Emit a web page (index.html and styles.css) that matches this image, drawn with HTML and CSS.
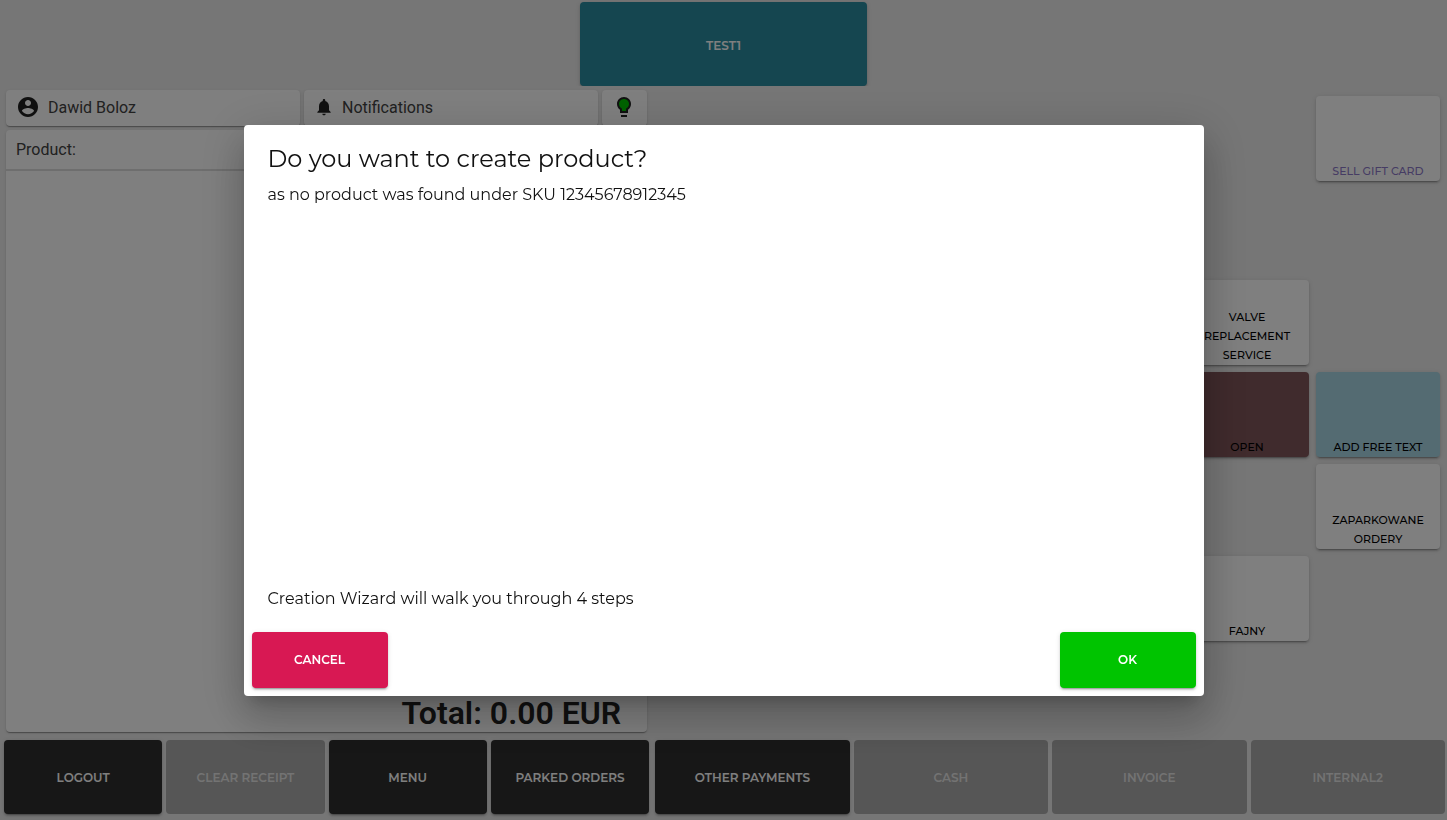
FILE: index.html
```html
<!DOCTYPE html>
<html lang="en">

<head>
    <meta charset="UTF-8" />
    <meta name="viewport" content="width=device-width, initial-scale=1.0" />
    <title>Point of Sale</title>
    <link rel="stylesheet" href="styles.css">
</head>

<body>
    <div class="pos">
        <!-- Top tabs -->
        <nav class="top-bar">
            <button type="button" class="btn btn-tab">TEST1</button>
        </nav>

        <main class="workspace">
            <!-- Receipt -->
            <section class="receipt">
                <div class="status-row">
                    <button type="button" class="status status-wide">
                        <svg class="icon" viewBox="0 0 24 24" aria-hidden="true">
                            <path d="M12 2C6.48 2 2 6.48 2 12s4.48 10 10 10 10-4.48 10-10S17.52 2 12 2zm0 3c1.66 0 3 1.34 3 3s-1.34 3-3 3-3-1.34-3-3 1.34-3 3-3zm0 14.2c-2.5 0-4.71-1.28-6-3.22.03-1.99 4-3.08 6-3.08 1.99 0 5.97 1.09 6 3.08-1.29 1.94-3.5 3.22-6 3.22z" />
                        </svg>
                        <span>Dawid Boloz</span>
                    </button>
                    <button type="button" class="status status-wide">
                        <svg class="icon icon-bell" viewBox="0 0 24 24" aria-hidden="true">
                            <path d="M12 22c1.1 0 2-.9 2-2h-4c0 1.1.89 2 2 2zm6-6v-5c0-3.07-1.64-5.64-4.5-6.32V4c0-.83-.67-1.5-1.5-1.5s-1.5.67-1.5 1.5v.68C7.63 5.36 6 7.92 6 11v5l-2 2v1h16v-1l-2-2z" />
                        </svg>
                        <span>Notifications</span>
                    </button>
                    <button type="button" class="status status-bulb" aria-label="Connection status">
                        <svg class="icon" viewBox="0 0 24 24" aria-hidden="true">
                            <path class="bulb-light" d="M12 3a6 6 0 0 0-6 6c0 2.2 1.2 4 3 5.1V17h6v-2.9c1.8-1.1 3-2.9 3-5.1a6 6 0 0 0-6-6z" />
                            <path d="M9 20h6v2H9z" />
                            <path d="M12 2C8.14 2 5 5.14 5 9c0 2.38 1.19 4.47 3 5.74V18h8v-3.26c1.81-1.27 3-3.36 3-5.74 0-3.86-3.14-7-7-7zm2.85 11.1l-.85.6V16h-4v-2.3l-.85-.6C7.8 12.16 7 10.63 7 9c0-2.76 2.24-5 5-5s5 2.24 5 5c0 1.63-.8 3.16-2.15 4.1z" />
                        </svg>
                    </button>
                </div>
                <div class="receipt-card">
                    <div class="receipt-head">Product:</div>
                    <div class="receipt-total">Total: 0.00 EUR</div>
                </div>
            </section>

            <!-- Quick buttons -->
            <section class="tiles">
                <button type="button" class="tile tile-gift">SELL GIFT CARD</button>
                <button type="button" class="tile tile-valve">VALVE REPLACEMENT SERVICE</button>
                <button type="button" class="tile tile-open">OPEN</button>
                <button type="button" class="tile tile-text">ADD FREE TEXT</button>
                <button type="button" class="tile tile-parked">ZAPARKOWANE ORDERY</button>
                <button type="button" class="tile tile-fajny">FAJNY</button>
            </section>
        </main>

        <!-- Bottom actions -->
        <footer class="actions">
            <div class="action-group action-left">
                <button type="button" class="btn btn-dark">LOGOUT</button>
                <button type="button" class="btn" disabled>CLEAR RECEIPT</button>
                <button type="button" class="btn btn-dark">MENU</button>
                <button type="button" class="btn btn-dark">PARKED ORDERS</button>
            </div>
            <div class="action-group action-right">
                <button type="button" class="btn btn-dark">OTHER PAYMENTS</button>
                <button type="button" class="btn" disabled>CASH</button>
                <button type="button" class="btn" disabled>INVOICE</button>
                <button type="button" class="btn" disabled>INTERNAL2</button>
            </div>
        </footer>
    </div>

    <!-- Create product dialog -->
    <div class="overlay">
        <div class="dialog" role="dialog" aria-modal="true" aria-labelledby="dialog-title">
            <div class="dialog-body">
                <h2 id="dialog-title">Do you want to create product?</h2>
                <p>as no product was found under SKU 12345678912345</p>
                <p class="dialog-note">Creation Wizard will walk you through 4 steps</p>
            </div>
            <div class="dialog-actions">
                <button type="button" class="btn btn-cancel">CANCEL</button>
                <button type="button" class="btn btn-ok">OK</button>
            </div>
        </div>
    </div>
</body>

</html>
```
FILE: styles.css
```css
* {
    box-sizing: border-box;
}

body {
    margin: 0;
    background-color: #ececec;
    color: #212121;
    font-family: Roboto, sans-serif;
    font-size: 16px;
}

button {
    border: none;
    font-family: inherit;
    cursor: pointer;
}

.pos {
    display: flex;
    flex-direction: column;
    height: 100vh;
}

/* Buttons */
.btn {
    border-radius: 4px;
    font-family: Montserrat, Inter, sans-serif;
    font-size: 12px;
    font-weight: 600;
    color: #fff;
    box-shadow: 0 3px 1px -2px rgba(0, 0, 0, 0.2), 0 2px 2px rgba(0, 0, 0, 0.14), 0 1px 5px rgba(0, 0, 0, 0.12);
}

.btn:disabled {
    background-color: #acacac;
    color: #e6e6e6;
    box-shadow: none;
    cursor: default;
}

.btn-dark {
    background-color: #2e2e2e;
}

/* Top tabs */
.top-bar {
    display: flex;
    justify-content: center;
    height: 86px;
    padding-top: 2px;
    overflow: hidden;
}

.btn-tab {
    width: calc(20% - 2px);
    padding-top: 4px;
    background-color: #2a8ca0;
}

.workspace {
    display: flex;
    flex: 1;
    min-height: 0;
}

/* Receipt */
.receipt {
    display: flex;
    flex-direction: column;
    gap: 4px;
    width: 45%;
    padding: 4px 4px 8px 6px;
}

.status-row {
    display: flex;
    gap: 4px;
}

.status {
    display: flex;
    align-items: center;
    gap: 8px;
    height: 36px;
    padding: 0 10px 2px;
    border-radius: 4px;
    background-color: #fff;
    color: #424242;
    font-size: 16px;
    box-shadow: 0 2px 1px -1px rgba(0, 0, 0, 0.2), 0 1px 1px rgba(0, 0, 0, 0.14), 0 1px 3px rgba(0, 0, 0, 0.12);
}

.status-wide {
    flex: 1;
}

.status-bulb {
    width: 45px;
}

.icon {
    width: 24px;
    height: 24px;
    flex: none;
    fill: #212121;
}

.icon-bell {
    width: 20px;
    height: 20px;
}

.icon .bulb-light {
    fill: #00c400;
}

.receipt-card {
    display: flex;
    flex: 1;
    flex-direction: column;
    justify-content: space-between;
    border-radius: 4px;
    background-color: #fff;
    box-shadow: 0 2px 1px -1px rgba(0, 0, 0, 0.2), 0 1px 1px rgba(0, 0, 0, 0.14), 0 1px 3px rgba(0, 0, 0, 0.12);
}

.receipt-head {
    padding: 0 10px;
    border-bottom: 2px solid #dcdcdc;
    color: #424242;
    line-height: 39px;
}

.receipt-total {
    padding-right: 26px;
    font-size: 32px;
    font-weight: 600;
    line-height: 38px;
    text-align: right;
}

/* Quick buttons */
.tiles {
    display: grid;
    flex: 1;
    grid-template-columns: repeat(6, 1fr);
    grid-auto-rows: 85px;
    gap: 7px;
    padding: 10px 7px 0 10px;
}

.tile {
    display: flex;
    align-items: flex-end;
    justify-content: center;
    padding: 0 8px;
    border-radius: 4px;
    background-color: #fff;
    color: #000;
    font-family: Montserrat, Inter, sans-serif;
    font-size: 11px;
    font-weight: 500;
    line-height: 19px;
    box-shadow: 0 3px 1px -2px rgba(0, 0, 0, 0.2), 0 2px 2px rgba(0, 0, 0, 0.14), 0 1px 5px rgba(0, 0, 0, 0.12);
}

.tile-gift {
    grid-area: 1 / 6;
    color: #8c78c8;
}

.tile-valve {
    grid-area: 3 / 5;
}

.tile-open {
    grid-area: 4 / 5;
    background-color: #80565a;
}

.tile-text {
    grid-area: 4 / 6;
    background-color: #a8d6e4;
}

.tile-parked {
    grid-area: 5 / 6;
}

.tile-fajny {
    grid-area: 6 / 5;
}

/* Bottom actions */
.actions {
    display: flex;
    padding-bottom: 6px;
}

.action-group {
    display: flex;
    gap: 4px;
}

.action-group .btn {
    flex: 1;
    height: 74px;
    padding: 0;
}

.action-left {
    width: 45%;
    padding: 0 2px 0 4px;
}

.action-right {
    flex: 1;
    padding: 0 2px 0 4px;
}

/* Dialog */
.overlay {
    position: fixed;
    inset: 0;
    display: flex;
    align-items: center;
    justify-content: center;
    background-color: rgba(0, 0, 0, 0.5);
}

.dialog {
    display: flex;
    flex-direction: column;
    width: 960px;
    max-width: 90%;
    min-height: 571px;
    border-radius: 4px;
    background-color: #fff;
    color: #111;
    font-family: Montserrat, Inter, sans-serif;
    box-shadow: 0 11px 15px -7px rgba(0, 0, 0, 0.2), 0 24px 38px 3px rgba(0, 0, 0, 0.14), 0 9px 46px 8px rgba(0, 0, 0, 0.12);
}

.dialog-body {
    display: flex;
    flex: 1;
    flex-direction: column;
    padding: 18px 24px 21px;
}

.dialog-body h2 {
    margin: 0 0 8px;
    font-size: 24px;
    font-weight: 400;
    line-height: 32px;
}

.dialog-body p {
    margin: 0;
    line-height: 24px;
}

.dialog-body .dialog-note {
    margin-top: auto;
}

.dialog-actions {
    display: flex;
    justify-content: space-between;
    padding: 0 8px 8px;
}

.dialog-actions .btn {
    width: 136px;
    height: 56px;
}

.btn-cancel {
    background-color: #d81853;
}

.btn-ok {
    background-color: #00c400;
}
```
